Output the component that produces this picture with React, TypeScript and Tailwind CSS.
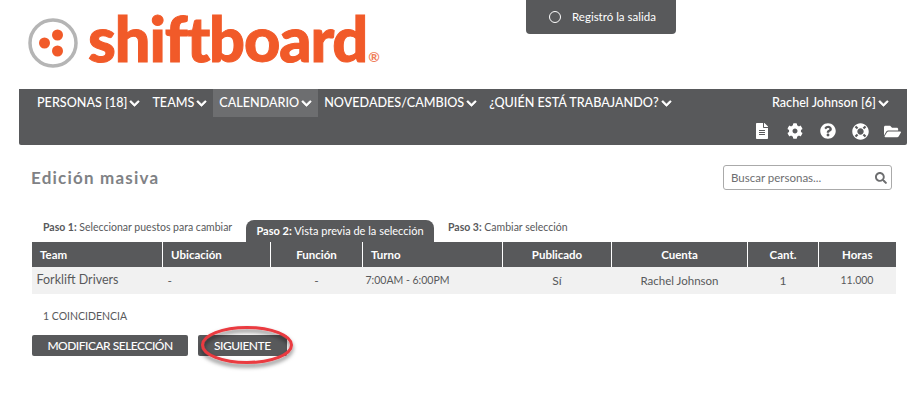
import React from "react";
import { FaChevronDown, FaFileAlt, FaCog, FaQuestionCircle, FaLifeRing, FaFolderOpen, FaSearch } from "react-icons/fa";

const Chev = () => <FaChevronDown className="ml-[2px] text-[11px] stroke-[30px]" />;

const NavItem = ({ label, active }: { label: string; active?: boolean }) => (
  <div className={`flex h-[28px] items-center pt-[1px] px-[6px] ${active ? "bg-[#6d6e70]" : ""}`}>
    <span>{label}</span>
    <Chev />
  </div>
);

const cols = [131, 108, 92, 140, 109, 136, 71, 77];
const heads = [
  ["Team", "text-left pl-[8px]"],
  ["Ubicación", "text-left pl-[8px]"],
  ["Función", "text-center"],
  ["Turno", "text-left pl-[8px]"],
  ["Publicado", "text-center"],
  ["Cuenta", "text-center"],
  ["Cant.", "text-center"],
  ["Horas", "text-center"],
];
const cells = [
  ["Forklift Drivers", "text-left pl-[5px] text-[12.5px]"],
  ["-", "text-left pl-[5px]"],
  ["-", "text-center"],
  ["7:00AM - 6:00PM", "text-left pl-[3px] text-[10.5px]"],
  ["Sí", "text-center"],
  ["Rachel Johnson", "text-center text-[11.5px]"],
  ["1", "text-center"],
  ["11.000", "text-center text-[10.5px]"],
];

export default function App() {
  return (
    <div className="h-[410px] w-[923px] overflow-hidden bg-white font-['Lato',sans-serif] text-[12px] text-[#58595b]">
      <header className="flex h-[89px] items-start">
        <div className="ml-[28px] mt-[18px] flex items-center">
          <svg width="50" height="50" viewBox="0 0 50 50">
            <circle cx="25" cy="25" r="23" fill="none" stroke="#b5b5b5" strokeWidth="3.5" />
            <circle cx="16.5" cy="25" r="5.5" fill="#f15a29" />
            <circle cx="29.5" cy="17" r="5.5" fill="#f15a29" />
            <circle cx="29.5" cy="33" r="5.5" fill="#f15a29" />
          </svg>
        </div>
        <div className="ml-[10px] mt-[3px] flex items-end font-['Lato',sans-serif] text-[63px] font-black leading-[70px] tracking-[-1.1px] text-[#f15a29] [-webkit-text-stroke:1px_#f15a29]">
          shiftboard
          <span className="mb-[9px] ml-[1px] text-[14px] font-bold leading-[14px] tracking-normal text-[#f0805c] [-webkit-text-stroke:0]">®</span>
        </div>
        <div className="absolute left-[526px] top-0 flex h-[34px] w-[150px] items-center rounded-b-[4px] bg-[#58595b] pl-[23px] text-white">
          <span className="h-[12px] w-[12px] rounded-full border border-white" />
          <span className="ml-[11px] text-[11.5px] leading-none">Registró la salida</span>
        </div>
      </header>

      <nav className="ml-[19px] h-[56px] w-[888px] rounded-b-[2px] bg-[#58595b] text-[12.6px] font-medium text-white">
        <div className="flex h-[28px] justify-between">
          <div className="ml-[12px] flex">
            <NavItem label="PERSONAS [18]" />
            <NavItem label="TEAMS" />
            <NavItem label="CALENDARIO" active />
            <NavItem label="NOVEDADES/CAMBIOS" />
            <NavItem label="¿QUIÉN ESTÁ TRABAJANDO?" />
          </div>
          <div className="mr-[18px] flex items-center pt-[1px]">
            <span>Rachel Johnson [6]</span>
            <Chev />
          </div>
        </div>
        <div className="flex h-[28px] items-center justify-end pr-[6px] text-[16px]">
          <FaFileAlt className="mr-[17px]" />
          <FaCog className="mr-[17px]" />
          <FaQuestionCircle className="mr-[16px]" />
          <FaLifeRing className="mr-[15px] text-[17px]" />
          <FaFolderOpen className="text-[17px]" />
        </div>
      </nav>

      <div className="ml-[31px] mt-[20px] flex h-[25px] w-[861px] items-center justify-between">
        <h1 className="text-[17px] font-bold tracking-[1.2px] text-[#808285]">Edición masiva</h1>
        <div className="flex h-[25px] w-[169px] items-center justify-between rounded-[3px] border border-[#aaaaaa] pl-[7px] pr-[4px] text-[11.5px] text-[#6d6e70]">
          <span>Buscar personas...</span>
          <FaSearch className="text-[12px] text-[#6d6e70]" />
        </div>
      </div>

      <div className="ml-[31px] mt-[30px] flex h-[22px] items-start text-[10.5px]">
        <div className="ml-[12px] w-[203px]">
          <b className="font-bold">Paso 1:</b> Seleccionar puestos para cambiar
        </div>
        <div className="flex h-[22px] w-[188px] items-center justify-center rounded-t-[8px] bg-[#58595b] pt-[1px] text-[11px] text-white">
          <span><b className="font-bold">Paso 2:</b> Vista previa de la selección</span>
        </div>
        <div className="ml-[14px]">
          <b className="font-bold">Paso 3:</b> Cambiar selección
        </div>
      </div>

      <table className="ml-[31px] w-[864px] table-fixed border-collapse">
        <colgroup>
          {cols.map((w, i) => (
            <col key={i} style={{ width: w }} />
          ))}
        </colgroup>
        <thead>
          <tr className="h-[25px] bg-[#58595b] text-[11.5px] text-white">
            {heads.map(([h, c], i) => (
              <th key={i} className={`border-l border-white font-bold ${c}`}>{h}</th>
            ))}
          </tr>
        </thead>
        <tbody>
          <tr className="h-[27px] bg-[#f1f1f1] text-[12px]">
            {cells.map(([t, c], i) => (
              <td key={i} className={c}>{t}</td>
            ))}
          </tr>
        </tbody>
      </table>

      <div className="ml-[43px] mt-[15px] text-[10.5px] leading-[14px]">1 COINCIDENCIA</div>

      <div className="relative ml-[32px] mt-[12px] flex gap-[10px] text-[12px] font-medium tracking-[-0.5px] text-white">
        <div className="flex h-[21px] w-[156px] items-center justify-center rounded-[2px] bg-[#58595b]">MODIFICAR SELECCIÓN</div>
        <div className="flex h-[21px] w-[89px] items-center rounded-[2px] bg-[#58595b] pl-[16px]">SIGUIENTE</div>
        <svg className="absolute left-[166px] top-[-10px]" width="100" height="48" viewBox="0 0 100 48">
          <defs>
            <filter id="s" x="-20%" y="-30%" width="140%" height="170%">
              <feDropShadow dx="0" dy="3" stdDeviation="2" floodColor="#000" floodOpacity="0.55" />
            </filter>
          </defs>
          <ellipse cx="49" cy="20" rx="44.5" ry="17.5" fill="none" stroke="#ea3a40" strokeWidth="3" filter="url(#s)" />
        </svg>
      </div>
    </div>
  );
}
